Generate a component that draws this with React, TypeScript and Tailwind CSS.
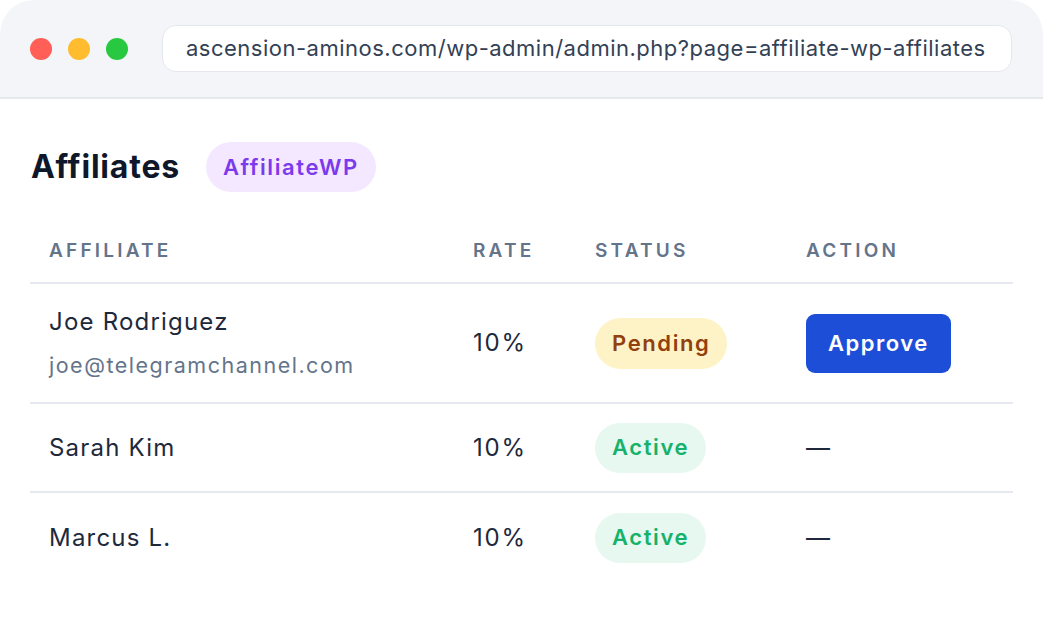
const rows = [
  {
    name: 'Joe Rodriguez',
    email: 'joe@telegramchannel.com',
    rate: '10%',
    status: 'Pending',
    action: true,
  },
  { name: 'Sarah Kim', rate: '10%', status: 'Active' },
  { name: 'Marcus L.', rate: '10%', status: 'Active' },
];

const cols = 'grid grid-cols-[424px_122px_211px_226px]';

function StatusBadge({ status }: { status: string }) {
  if (status === 'Pending') {
    return (
      <span className="inline-flex h-[51px] items-center rounded-full bg-[#fef3c7] px-[17px] text-[22px] font-semibold tracking-[1.6px] text-[#92400e]">
        Pending
      </span>
    );
  }
  return (
    <span className="inline-flex h-[50px] items-center rounded-full bg-[#e7f8f0] px-[17px] text-[22px] font-semibold tracking-[1.6px] text-[#17b26a]">
      {status}
    </span>
  );
}

export default function App() {
  return (
    <div className="h-[624px] w-[1043px] overflow-hidden bg-white font-['Inter',sans-serif]">
      <div className="h-full w-full overflow-hidden rounded-t-[34px] bg-white">
        {/* Browser chrome */}
        <div className="flex h-[99px] items-center border-b-2 border-[#e6e8ee] bg-[#f4f5f9] pl-[30px] pr-[31px]">
          <div className="flex items-center gap-[16px]">
            <span className="h-[22px] w-[22px] rounded-full bg-[#ff5f57]" />
            <span className="h-[22px] w-[22px] rounded-full bg-[#febc2e]" />
            <span className="h-[22px] w-[22px] rounded-full bg-[#28c840]" />
          </div>
          <div className="ml-[34px] flex h-[47px] flex-1 items-center rounded-[14px] border border-[#e5e7ee] bg-white pl-[23px] text-[22px] tracking-[0.5px] text-[#334155]">
            ascension-aminos.com/wp-admin/admin.php?page=affiliate-wp-affiliates
          </div>
        </div>

        {/* Page */}
        <div className="px-[30px]">
          <div className="mt-[43px] flex h-[50px] items-center">
            <h1 className="pl-[1px] text-[32px] font-bold tracking-[0.8px] text-[#0f172a]">Affiliates</h1>
            <span className="ml-[26px] inline-flex h-[50px] items-center rounded-full bg-[#f3e8ff] px-[17px] text-[22px] font-semibold tracking-[1.6px] text-[#7c3aed]">
              AffiliateWP
            </span>
          </div>

          <div className={`${cols} mt-[30px] border-b-2 border-[#e6e9f0] pb-[19px] pt-[17px] text-[19px] font-semibold uppercase leading-[24px] tracking-[3.2px] text-[#64748b]`}>
            <div className="pl-[19px]">Affiliate</div>
            <div className="pl-[19px]">Rate</div>
            <div className="pl-[19px]">Status</div>
            <div className="pl-[19px]">Action</div>
          </div>

          {rows.map((r, i) => (
            <div
              key={r.name}
              className={`${cols} items-center ${r.email ? 'h-[120px]' : 'h-[89px]'} ${i < rows.length - 1 ? 'border-b-2 border-[#e6e9f0]' : ''}`}
            >
              <div className="pl-[19px]">
                <div className="text-[24px] leading-[30px] tracking-[1.2px] text-[#1e293b]">{r.name}</div>
                {r.email && (
                  <div className="mt-[14px] text-[21.5px] leading-[28px] tracking-[1.5px] text-[#64748b]">{r.email}</div>
                )}
              </div>
              <div className="pl-[19px] text-[24px] tracking-[1.8px] text-[#1e293b]">{r.rate}</div>
              <div className="pl-[19px]">
                <StatusBadge status={r.status} />
              </div>
              <div className="pl-[19px]">
                {r.action ? (
                  <button className="h-[59px] rounded-[9px] bg-[#1d4ed8] px-[22px] text-[22px] font-semibold tracking-[1.5px] text-white">
                    Approve
                  </button>
                ) : (
                  <span className="text-[24px] text-[#1e293b]">—</span>
                )}
              </div>
            </div>
          ))}
        </div>
      </div>
    </div>
  );
}
